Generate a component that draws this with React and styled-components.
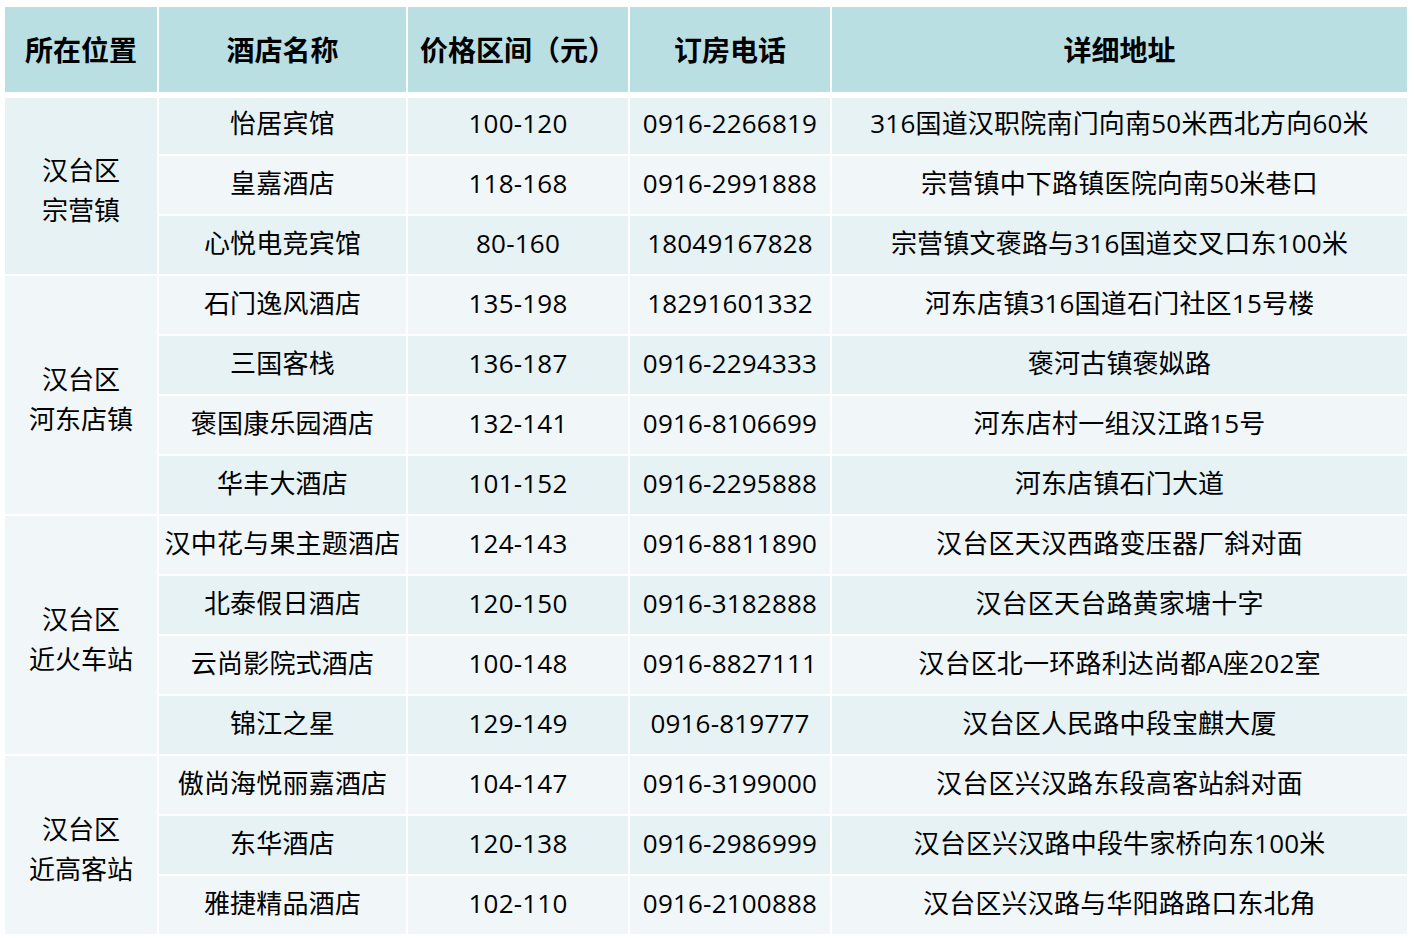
import React from "react";
import styled, { createGlobalStyle } from "styled-components";

const GlobalStyle = createGlobalStyle`
  html, body { margin: 0; padding: 0; background: #ffffff; }
  body { font-family: "Open Sans", "Noto Sans CJK SC", "Noto Sans", sans-serif; color: #000; }
`;

const COLS = "152px 247px 220px 200px 575px";

const Page = styled.div`
  padding: 7px 0 0 5px;
`;

const HeaderGrid = styled.div`
  display: grid;
  grid-template-columns: ${COLS};
  column-gap: 2px;
  height: 85px;
`;

const HeadCell = styled.div`
  background: #badfe3;
  display: flex;
  align-items: center;
  justify-content: center;
  font-family: "Noto Sans CJK SC", "Noto Sans", sans-serif;
  font-size: 28px;
  font-weight: 700;
  padding-bottom: 2px;
  box-sizing: border-box;
`;

const BodyGrid = styled.div`
  display: grid;
  grid-template-columns: ${COLS};
  grid-template-rows: 56px repeat(13, 58px);
  gap: 2px;
  margin-top: 6px;
`;

const Cell = styled.div`
  background: ${(p) => (p.$dark ? "#e6f2f4" : "#f1f7f9")};
  display: flex;
  align-items: center;
  justify-content: center;
  font-size: 26px;
  line-height: 36px;
  letter-spacing: 0.2px;
  white-space: nowrap;
  padding-bottom: ${(p) => (p.$first ? "6px" : "4px")};
  box-sizing: border-box;
`;

const LocCell = styled(Cell)`
  grid-row: span ${(p) => p.$span};
  flex-direction: column;
  line-height: 40px;
  letter-spacing: 0;
  padding-bottom: 0;
  padding-top: 8px;
`;

const headers = ["所在位置", "酒店名称", "价格区间（元）", "订房电话", "详细地址"];

const groups = [
  {
    loc: ["汉台区", "宗营镇"],
    rows: [
      ["怡居宾馆", "100-120", "0916-2266819", "316国道汉职院南门向南50米西北方向60米"],
      ["皇嘉酒店", "118-168", "0916-2991888", "宗营镇中下路镇医院向南50米巷口"],
      ["心悦电竞宾馆", "80-160", "18049167828", "宗营镇文褒路与316国道交叉口东100米"],
    ],
  },
  {
    loc: ["汉台区", "河东店镇"],
    rows: [
      ["石门逸风酒店", "135-198", "18291601332", "河东店镇316国道石门社区15号楼"],
      ["三国客栈", "136-187", "0916-2294333", "褒河古镇褒姒路"],
      ["褒国康乐园酒店", "132-141", "0916-8106699", "河东店村一组汉江路15号"],
      ["华丰大酒店", "101-152", "0916-2295888", "河东店镇石门大道"],
    ],
  },
  {
    loc: ["汉台区", "近火车站"],
    rows: [
      ["汉中花与果主题酒店", "124-143", "0916-8811890", "汉台区天汉西路变压器厂斜对面"],
      ["北泰假日酒店", "120-150", "0916-3182888", "汉台区天台路黄家塘十字"],
      ["云尚影院式酒店", "100-148", "0916-8827111", "汉台区北一环路利达尚都A座202室"],
      ["锦江之星", "129-149", "0916-819777", "汉台区人民路中段宝麒大厦"],
    ],
  },
  {
    loc: ["汉台区", "近高客站"],
    rows: [
      ["傲尚海悦丽嘉酒店", "104-147", "0916-3199000", "汉台区兴汉路东段高客站斜对面"],
      ["东华酒店", "120-138", "0916-2986999", "汉台区兴汉路中段牛家桥向东100米"],
      ["雅捷精品酒店", "102-110", "0916-2100888", "汉台区兴汉路与华阳路路口东北角"],
    ],
  },
];

export default function App() {
  let rowIndex = 0;
  const cells = [];
  groups.forEach((g, gi) => {
    g.rows.forEach((r, ri) => {
      const dark = rowIndex % 2 === 0;
      const first = rowIndex === 0;
      if (ri === 0) {
        cells.push(
          <LocCell key={`loc-${gi}`} $span={g.rows.length} $dark={dark}>
            {g.loc.map((l) => (
              <span key={l}>{l}</span>
            ))}
          </LocCell>
        );
      }
      r.forEach((v, ci) => {
        cells.push(
          <Cell key={`${rowIndex}-${ci}`} $dark={dark} $first={first}>
            {v}
          </Cell>
        );
      });
      rowIndex += 1;
    });
  });

  return (
    <>
      <GlobalStyle />
      <Page>
        <HeaderGrid>
          {headers.map((h) => (
            <HeadCell key={h}>{h}</HeadCell>
          ))}
        </HeaderGrid>
        <BodyGrid>{cells}</BodyGrid>
      </Page>
    </>
  );
}
